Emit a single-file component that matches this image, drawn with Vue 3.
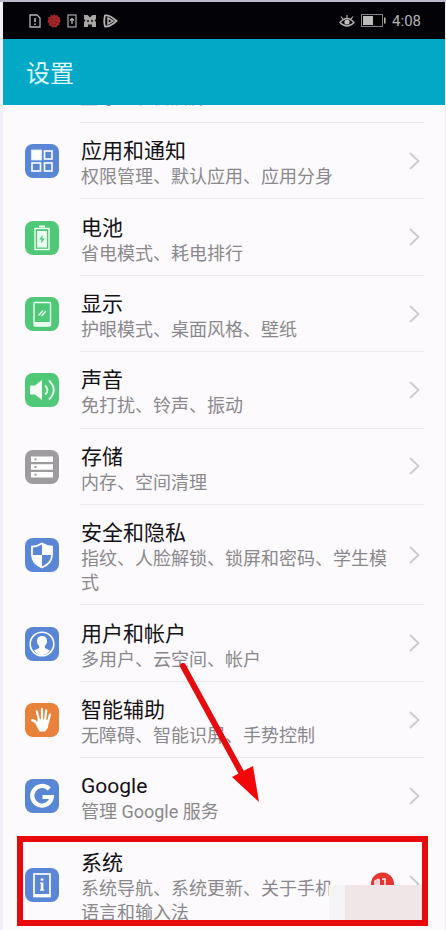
<script setup>
const rows = [
  { id: 'apps', title: '应用和通知', sub: '权限管理、默认应用、应用分身', tone: 'blue' },
  { id: 'battery', title: '电池', sub: '省电模式、耗电排行', tone: 'green' },
  { id: 'display', title: '显示', sub: '护眼模式、桌面风格、壁纸', tone: 'green' },
  { id: 'sound', title: '声音', sub: '免打扰、铃声、振动', tone: 'green' },
  { id: 'storage', title: '存储', sub: '内存、空间清理', tone: 'gray' },
  { id: 'security', title: '安全和隐私', sub: '指纹、人脸解锁、锁屏和密码、学生模式', tone: 'blue' },
  { id: 'users', title: '用户和帐户', sub: '多用户、云空间、帐户', tone: 'blue' },
  { id: 'assist', title: '智能辅助', sub: '无障碍、智能识屏、手势控制', tone: 'orange' },
  { id: 'google', title: 'Google', sub: '管理 Google 服务', tone: 'blue' },
  { id: 'system', title: '系统', sub: '系统导航、系统更新、关于手机\n语言和输入法', tone: 'blue', badge: true },
]
</script>

<template>
  <div class="page">
    <div class="status">
      <div class="status-group">
        <svg width="12" height="14" viewBox="0 0 12 14">
          <path d="M1 1h7l3 3v9H1z" fill="none" stroke="#b5b2b2" stroke-width="1.3" />
          <path d="M6 4v4M6 9.500v1.500" stroke="#c5c2c2" stroke-width="1.500" />
        </svg>
        <svg width="14" height="14" viewBox="0 0 14 14">
          <path d="M7 .5l1.500 1 2-.5.7 1.800 2 .8-.5 2 1 1.700-1.300 1.600.1 2-2 .7-1 1.800-2-.5-2 .8-1.300-1.600-2-.5-.1-2L.4 7.300l1-1.700-.3-2L3 2.800 3.800 1l2 .5z" fill="#a3262b" />
          <path d="M3 5.500h3M8 4.500h3M4 8l2-1M8 7.500l3 1M5 10.500h4" stroke="#7d1b20" stroke-width="1" />
        </svg>
        <svg width="10" height="14" viewBox="0 0 10 14">
          <rect x="1" y="1" width="8" height="12" fill="none" stroke="#aaa7a7" stroke-width="1.200" />
          <path d="M5 10V5M3 6.500l2-2 2 2" fill="none" stroke="#c0bdbd" stroke-width="1.200" />
        </svg>
        <svg width="14" height="14" viewBox="0 0 14 14">
          <path d="M1 1h12v12H1z" fill="#a9a6a6" />
          <path d="M4.500 1L7 3.500 9.500 1zM1 5l1.500 1.500L1 8zM13 5l-1.500 1.500L13 8zM5 13v-2.500h4V13z" fill="#141317" />
          <path d="M4 7h2M8 7h2" stroke="#141317" stroke-width="1.500" />
        </svg>
        <svg width="15" height="14" viewBox="0 0 15 14">
          <path d="M2 1.500q5-.5 11.500 5.500Q7 13 2 12.500 .5 7 2 1.500z" fill="none" stroke="#b5b2b2" stroke-width="1.800" />
          <path d="M5 4l5 3-5 3z" fill="none" stroke="#b5b2b2" stroke-width="1.500" />
        </svg>
      </div>
      <div class="status-group right">
        <svg width="16" height="14" viewBox="0 0 16 14">
          <path d="M1 8.500q7-8 14 0-7 7-14 0z" fill="none" stroke="#b5b2b2" stroke-width="1.400" />
          <circle cx="8" cy="8" r="2.600" fill="#c0bdbd" />
          <path d="M8 4V1M4 5L2 2.500M12 5l2-2.500" stroke="#b5b2b2" stroke-width="1.200" />
        </svg>
        <svg width="25" height="13" viewBox="0 0 25 13">
          <rect x=".5" y=".5" width="21" height="12" fill="none" stroke="#858286" />
          <path d="M2 2h10v9H2z" fill="#bcb9bb" />
          <path d="M23 3.500h1.500v6H23z" fill="#bcb9bb" />
        </svg>
        <span class="time">4:08</span>
      </div>
    </div>

    <header class="header"><h1>设置</h1></header>

    <ul class="list">
      <li class="peek"><span class="peek-body sub">蓝牙、手机投屏</span></li>
      <li v-for="row in rows" :key="row.id" class="item">
        <a class="row" :href="'#' + row.id">
          <svg class="icon" :class="row.tone" width="34" height="34" viewBox="0 0 34 34" aria-hidden="true">
            <rect width="34" height="34" rx="8" fill="currentColor" />
            <g v-if="row.id === 'apps'" fill="none" stroke="#f5f8ff" stroke-width="1.700">
              <rect x="7" y="6.500" width="9" height="9" fill="#fff" />
              <rect x="19.500" y="7" width="7.500" height="8" />
              <rect x="7" y="19" width="8.500" height="8" />
              <rect x="19.500" y="19" width="7.500" height="8" />
            </g>
            <g v-else-if="row.id === 'battery'">
              <path d="M14 4.500h6v2h-6z" fill="#eafff1" />
              <rect x="10" y="7.500" width="14" height="21" fill="none" stroke="#eafff1" stroke-width="1.400" />
              <path d="M12 10h10v16.500H12z" fill="#eafff1" />
              <path d="M17.600 14l-3.300 4.600h2.300l-.3 4 3.400-5.100h-2.300z" fill="#4fc878" />
            </g>
            <g v-else-if="row.id === 'display'">
              <rect x="9" y="5.500" width="16.500" height="23.500" rx="1" fill="none" stroke="#eafff1" stroke-width="1.400" />
              <path d="M9 25h16.500v4H9z" fill="#eafff1" />
              <path d="M13.500 18.500l4.500-5M16.500 19l4.500-5" stroke="#eafff1" stroke-width="1.300" />
            </g>
            <g v-else-if="row.id === 'sound'">
              <path d="M5 12.500h5l7-5.500v20l-7-5.500H5z" fill="#f4fff8" />
              <path d="M20 12.500q5 4.500 0 9M24 7.500q9.500 9.500 0 19" fill="none" stroke="#e6ffee" stroke-width="1.800" />
            </g>
            <g v-else-if="row.id === 'storage'">
              <path d="M6 6.500h22v5.500H6zM6 14.300h22v5.500H6zM6 22.100h22v5.500H6z" fill="#fff" />
              <path d="M9.500 8.200h2v2h-2zM9.500 16h2v2h-2zM9.500 23.800h2v2h-2z" fill="#9f9ca0" />
            </g>
            <g v-else-if="row.id === 'security'">
              <path d="M17 5.500q5 3 10 3.200V17q0 8-10 12.500Q7 25 7 17V8.700q5-.2 10-3.200z" fill="none" stroke="#fff" stroke-width="1.800" />
              <path d="M17 6q5 3 9.500 3v8H17zM17 17v12Q8 25 7.500 17z" fill="#fff" />
            </g>
            <g v-else-if="row.id === 'users'">
              <circle cx="17" cy="17" r="11.800" fill="none" stroke="#fff" stroke-width="1.600" />
              <path d="M17 9c3.500 0 5 2.400 5 5.200 0 2-.9 3.600-2.200 4.800v2l5.200 2.500q-3.300 4.500-8 4.500t-8-4.500l5.200-2.500v-2C12.900 17.800 12 16.200 12 14.200 12 11.400 13.500 9 17 9z" fill="#fff" />
            </g>
            <g v-else-if="row.id === 'assist'" fill="none" stroke="#fff" stroke-linecap="round">
              <path d="M14 17L11.800 8.300M17 16V5.800M20 17l1.300-9.600M23 19l2-7.500" stroke-width="2.200" />
              <path d="M7.300 17.300q3 .2 5.500 5" stroke-width="2.400" />
              <path d="M12.800 16l11.300 1-1.300 8-2.700 3.500h-5.400L11.500 23z" fill="#fff" stroke="none" />
            </g>
            <path v-else-if="row.id === 'google'" d="M24.200 10A9.800 9.800 0 1 0 26.800 18H17.500" fill="none" stroke="#fff" stroke-width="4.200" />
            <g v-else>
              <rect x="9" y="6" width="16" height="22.500" fill="none" stroke="#fff" stroke-width="1.700" />
              <path d="M9 26h16v3H9z" fill="#fff" />
              <path d="M15.800 10.500h2.600v2.300h-2.600zM15 14.500h3.400v7h.8v1.200H15v-1.200h.8v-5.800H15z" fill="#fff" />
            </g>
          </svg>
          <span class="body">
            <span class="texts">
              <span class="title">{{ row.title }}</span>
              <span class="sub">{{ row.sub }}</span>
            </span>
            <svg v-if="row.badge" class="badge" width="24" height="24" viewBox="0 0 24 24" aria-hidden="true">
              <circle cx="12.500" cy="12" r="11.500" fill="#e8352f" />
              <path d="M4 10q0-2.500 2.500-2.500Q8 5.500 10 7.500V13H4z" fill="#ffd5cf" />
              <path d="M12 7h3v7" fill="none" stroke="#ffe7e3" stroke-width="1.600" />
            </svg>
            <svg class="chevron" width="11" height="18" viewBox="0 0 11 18" aria-hidden="true">
              <path d="M1 1l8.500 8L1 17" fill="none" stroke="#cccacd" stroke-width="1.800" />
            </svg>
          </span>
        </a>
      </li>
    </ul>

    <div class="mosaic"></div>
    <div class="frame"></div>
    <svg class="arrow" width="80" height="140" viewBox="0 0 80 140" aria-hidden="true">
      <path d="M3 3l58 106" stroke="#e60b0e" stroke-width="6" stroke-linecap="round" />
      <path d="M79 139L52 114l21-11z" fill="#f20608" />
    </svg>
  </div>
</template>

<style>
body {
  margin: 0;
  background: #f0effa;
}
</style>

<style scoped>
.page {
  position: relative;
  box-sizing: border-box;
  display: flex;
  flex-direction: column;
  min-height: 100vh;
  padding: 2px 1px 0 3px;
  overflow: hidden;
  background: linear-gradient(#b9b9cb 0 2px, #f0effa 2px);
  font-family: Roboto, "Noto Sans CJK SC", sans-serif;
}
.status {
  display: flex;
  justify-content: space-between;
  align-items: center;
  height: 37px;
  padding: 0 24px 0 26px;
  background: #030206;
}
.status-group {
  display: flex;
  align-items: center;
  gap: 6px;
}
.time {
  color: #b5b2b4;
  font-size: 15px;
  line-height: 20px;
}
.header {
  display: flex;
  align-items: center;
  height: 66px;
  padding: 0 23px;
  background: #02a9c6;
}
h1 {
  margin: 0;
  padding-top: 4px;
  color: #dffaff;
  font-size: 24px;
  font-weight: 400;
  line-height: 32px;
}
.list {
  flex: 1;
  display: flex;
  flex-direction: column;
  margin: 0;
  padding: 0;
  list-style: none;
  background: #fcfafd;
}
.peek {
  display: flex;
  height: 18px;
  padding: 0 21px 0 77px;
  overflow: hidden;
}
.peek-body {
  flex: 1;
  display: flex;
  align-items: flex-end;
  padding-bottom: 12px;
  border-bottom: 1px solid #ebe9ed;
}
.item {
  flex: 1 0 auto;
  display: flex;
}
.item:last-child {
  margin-bottom: -5px;
}
.item:last-child .body {
  border-bottom-color: transparent;
}
.row {
  flex: 1;
  display: flex;
  align-items: center;
  gap: 21px;
  padding: 0 21px 0 22px;
  color: inherit;
  text-decoration: none;
}
.icon {
  flex: none;
}
.blue {
  color: #5a86d6;
}
.green {
  color: #4fc878;
}
.gray {
  color: #9f9ca0;
}
.orange {
  color: #e8823a;
}
.body {
  flex: 1;
  align-self: stretch;
  display: flex;
  align-items: center;
  gap: 10px;
  padding-right: 4px;
  border-bottom: 1px solid #ebe9ed;
}
.texts {
  flex: 1;
  display: flex;
  flex-direction: column;
  padding: 15px 0 9px 1px;
}
.title {
  color: #121114;
  font-size: 21px;
  line-height: 27px;
}
.sub {
  color: #8a888c;
  font-size: 18px;
  line-height: 24px;
  white-space: pre-line;
}
.badge {
  flex: none;
  margin-right: 5px;
}
.chevron {
  flex: none;
}
.mosaic {
  position: absolute;
  right: 23px;
  bottom: 10px;
  width: 94px;
  height: 35px;
  background: linear-gradient(90deg, #f5f4f6 16px, #f0e5e7 16px);
}
.frame {
  position: absolute;
  left: 17px;
  right: 18px;
  bottom: 4px;
  height: 78px;
  border: 6px solid #e8090c;
}
.arrow {
  position: absolute;
  left: 180px;
  bottom: 127px;
}
</style>
